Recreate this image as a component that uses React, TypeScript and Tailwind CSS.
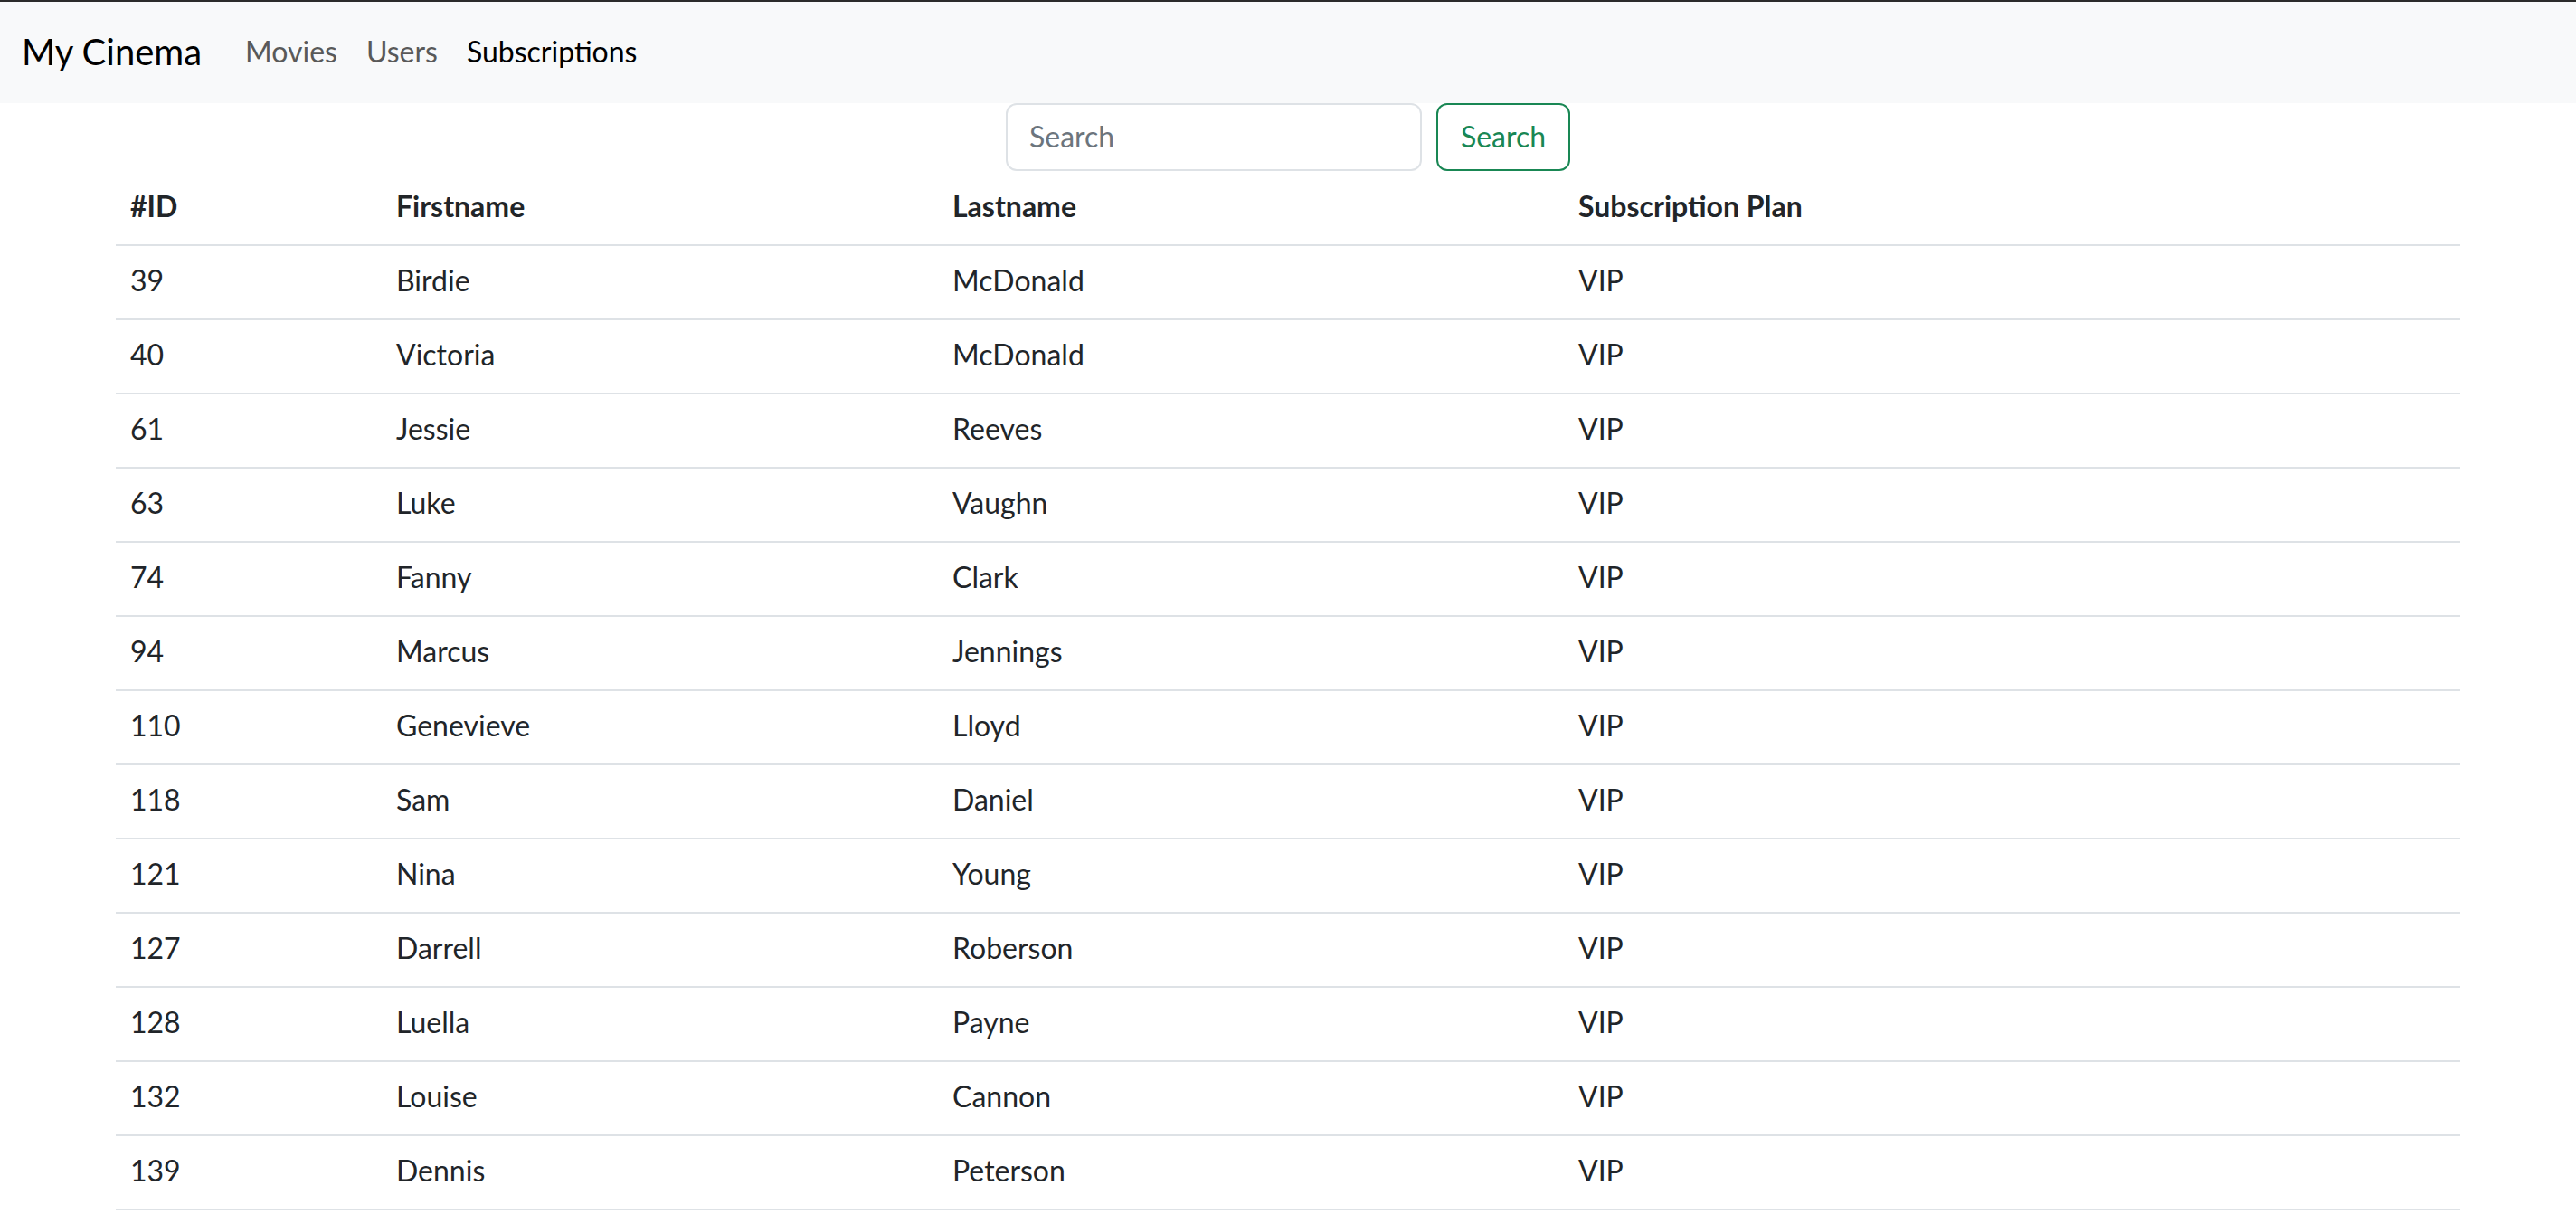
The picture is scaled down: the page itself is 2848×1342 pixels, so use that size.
import React from 'react';

const rows = [
  { id: 39, first: 'Birdie', last: 'McDonald', plan: 'VIP' },
  { id: 40, first: 'Victoria', last: 'McDonald', plan: 'VIP' },
  { id: 61, first: 'Jessie', last: 'Reeves', plan: 'VIP' },
  { id: 63, first: 'Luke', last: 'Vaughn', plan: 'VIP' },
  { id: 74, first: 'Fanny', last: 'Clark', plan: 'VIP' },
  { id: 94, first: 'Marcus', last: 'Jennings', plan: 'VIP' },
  { id: 110, first: 'Genevieve', last: 'Lloyd', plan: 'VIP' },
  { id: 118, first: 'Sam', last: 'Daniel', plan: 'VIP' },
  { id: 121, first: 'Nina', last: 'Young', plan: 'VIP' },
  { id: 127, first: 'Darrell', last: 'Roberson', plan: 'VIP' },
  { id: 128, first: 'Luella', last: 'Payne', plan: 'VIP' },
  { id: 132, first: 'Louise', last: 'Cannon', plan: 'VIP' },
  { id: 139, first: 'Dennis', last: 'Peterson', plan: 'VIP' }
];

export default function App() {
  return (
    <div className="min-h-screen bg-white text-[#212529] font-['Lato',sans-serif] text-[32px] leading-[48px]">
      <div className="h-[2px] bg-[#2b2b2b]" />
      <nav className="h-[112px] bg-[#f8f9fa] flex items-center px-[24px] pb-[3px]">
        <a className="text-[40px] leading-[60px] text-black mr-[32px]">My Cinema</a>
        <a className="px-[16px] text-[#595959]">Movies</a>
        <a className="px-[16px] text-[#595959]">Users</a>
        <a className="px-[16px] text-black">Subscriptions</a>
      </nav>

      <form className="flex justify-center gap-[16px]">
        <input
          type="search"
          placeholder="Search"
          className="w-[460px] h-[75px] px-[24px] pb-[2px] border-2 border-[#dee2e6] rounded-[12px] text-[32px] placeholder:text-[#6c757d] outline-none"
        />
        <button
          type="button"
          className="w-[148px] h-[75px] pb-[2px] border-2 border-[#198754] rounded-[12px] text-[#198754] text-[32px]"
        >
          Search
        </button>
      </form>

      <div className="max-w-[2640px] mx-auto px-[24px]">
        <table className="w-full table-fixed border-collapse text-left">
          <thead>
            <tr>
              <th className="w-[294px] px-[16px] pt-[15px] pb-[18px] font-bold border-b-2 border-[#dee2e6]">#ID</th>
              <th className="w-[615px] px-[16px] pt-[15px] pb-[18px] font-bold border-b-2 border-[#dee2e6]">Firstname</th>
              <th className="w-[692px] px-[16px] pt-[15px] pb-[18px] font-bold border-b-2 border-[#dee2e6]">Lastname</th>
              <th className="px-[16px] pt-[15px] pb-[18px] font-bold border-b-2 border-[#dee2e6]">Subscription Plan</th>
            </tr>
          </thead>
          <tbody>
            {rows.map((r) => (
              <tr key={r.id}>
                <td className="px-[16px] pt-[14px] pb-[18px] border-b-2 border-[#dee2e6]">{r.id}</td>
                <td className="px-[16px] pt-[14px] pb-[18px] border-b-2 border-[#dee2e6]">{r.first}</td>
                <td className="px-[16px] pt-[14px] pb-[18px] border-b-2 border-[#dee2e6]">{r.last}</td>
                <td className="px-[16px] pt-[14px] pb-[18px] border-b-2 border-[#dee2e6]">{r.plan}</td>
              </tr>
            ))}
          </tbody>
        </table>
      </div>
    </div>
  );
}
